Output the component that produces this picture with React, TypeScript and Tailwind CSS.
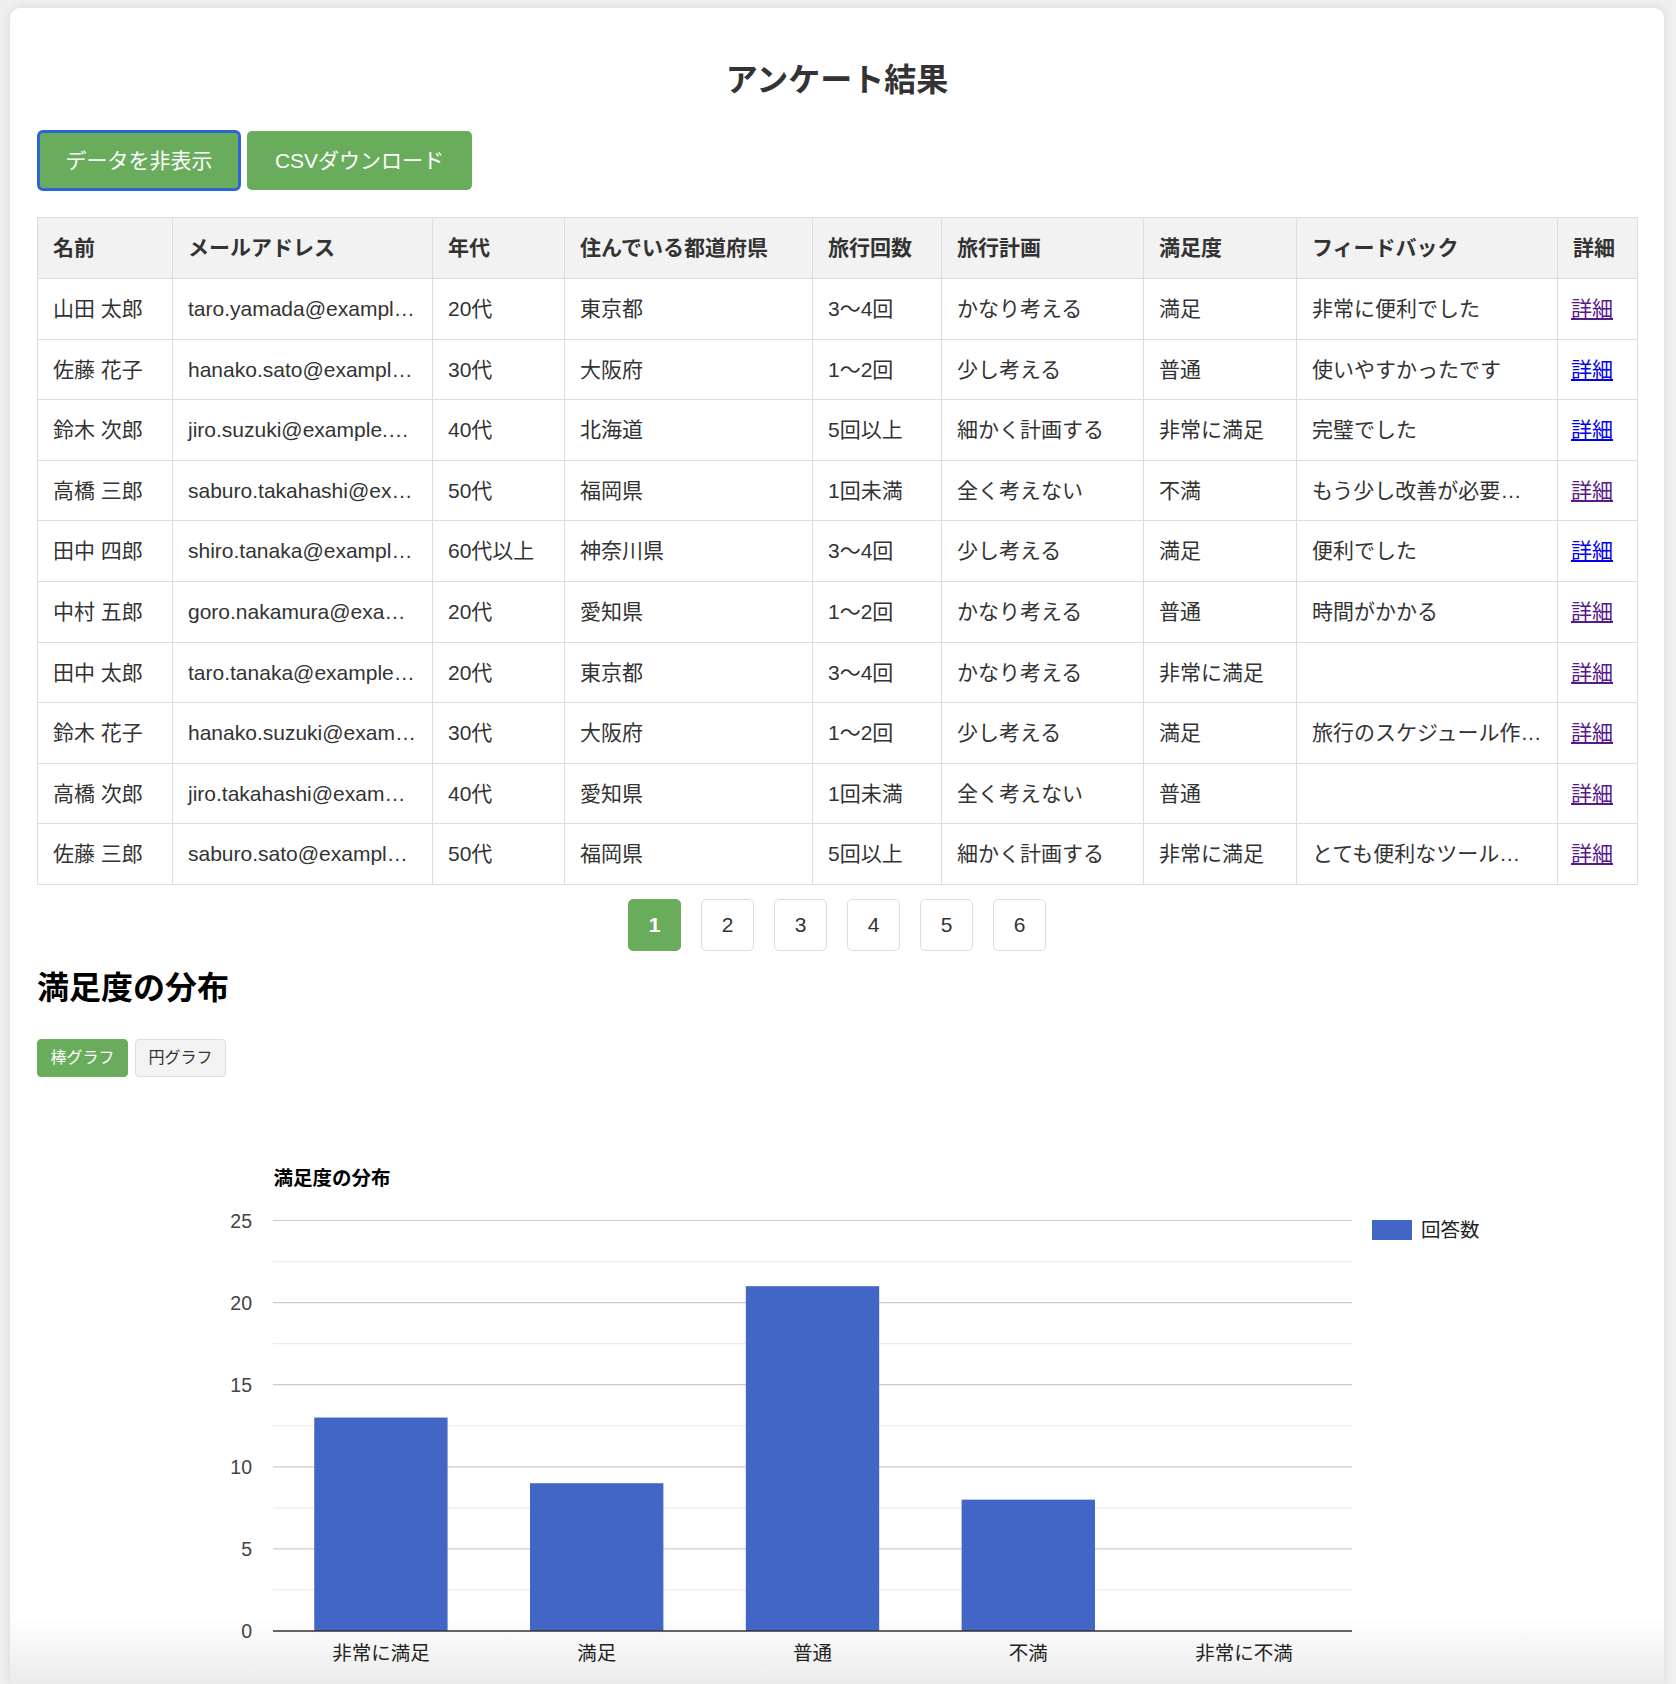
import React from "react";

const rows = [
  ["山田 太郎", "taro.yamada@example.com", "20代", "東京都", "3〜4回", "かなり考える", "満足", "非常に便利でした", true],
  ["佐藤 花子", "hanako.sato@example.com", "30代", "大阪府", "1〜2回", "少し考える", "普通", "使いやすかったです", false],
  ["鈴木 次郎", "jiro.suzuki@example.com", "40代", "北海道", "5回以上", "細かく計画する", "非常に満足", "完璧でした", false],
  ["高橋 三郎", "saburo.takahashi@example.com", "50代", "福岡県", "1回未満", "全く考えない", "不満", "もう少し改善が必要だと思います", true],
  ["田中 四郎", "shiro.tanaka@example.com", "60代以上", "神奈川県", "3〜4回", "少し考える", "満足", "便利でした", false],
  ["中村 五郎", "goro.nakamura@example.com", "20代", "愛知県", "1〜2回", "かなり考える", "普通", "時間がかかる", true],
  ["田中 太郎", "taro.tanaka@example.com", "20代", "東京都", "3〜4回", "かなり考える", "非常に満足", "", true],
  ["鈴木 花子", "hanako.suzuki@example.com", "30代", "大阪府", "1〜2回", "少し考える", "満足", "旅行のスケジュール作成が簡単でした", true],
  ["高橋 次郎", "jiro.takahashi@example.com", "40代", "愛知県", "1回未満", "全く考えない", "普通", "", true],
  ["佐藤 三郎", "saburo.sato@example.com", "50代", "福岡県", "5回以上", "細かく計画する", "非常に満足", "とても便利なツールでした", true],
] as const;

const headers = ["名前", "メールアドレス", "年代", "住んでいる都道府県", "旅行回数", "旅行計画", "満足度", "フィードバック", "詳細"];
const colWidths = [135, 260, 132, 248, 129, 202, 153, 261, 80];

const chartData = [
  { label: "非常に満足", value: 13 },
  { label: "満足", value: 9 },
  { label: "普通", value: 21 },
  { label: "不満", value: 8 },
  { label: "非常に不満", value: 0 },
];

function Chart() {
  const left = 236;
  const right = 1315;
  const base = 530;
  const unit = 16.42;
  const catW = (right - left) / 5;
  const barW = catW * 0.618;
  const font = "'Liberation Sans','Noto Sans CJK JP',sans-serif";
  const majors = [0, 5, 10, 15, 20, 25];
  const minors = [2.5, 7.5, 12.5, 17.5, 22.5];
  return (
    <svg width="1600" height="600" viewBox="0 0 1600 600" fontFamily={font} className="block">
      <text x="236.5" y="77" dominantBaseline="central" fontSize="19.5" fontWeight="bold" fill="#000">
        満足度の分布
      </text>
      {minors.map((v) => (
        <line key={"mi" + v} x1={left} x2={right} y1={base - v * unit} y2={base - v * unit} stroke="#ebebeb" strokeWidth="1.2" />
      ))}
      {majors.slice(1).map((v) => (
        <line key={"ma" + v} x1={left} x2={right} y1={base - v * unit} y2={base - v * unit} stroke="#cccccc" strokeWidth="1.2" />
      ))}
      {majors.map((v) => (
        <text key={"yl" + v} x="215" y={base - v * unit} textAnchor="end" dominantBaseline="central" fontSize="19.5" fill="#444">
          {v}
        </text>
      ))}
      {chartData.map((d, i) => (
        <rect
          key={d.label}
          x={left + i * catW + (catW - barW) / 2}
          y={base - d.value * unit}
          width={barW}
          height={d.value * unit}
          fill="#4166c5"
        />
      ))}
      <line x1={left} x2={right} y1={base} y2={base} stroke="#333" strokeWidth="1.5" />
      {chartData.map((d, i) => (
        <text key={"xl" + d.label} x={left + i * catW + catW / 2} y="552" textAnchor="middle" dominantBaseline="central" fontSize="19.5" fill="#222">
          {d.label}
        </text>
      ))}
      <rect x="1335" y="119" width="40" height="20" fill="#4166c5" />
      <text x="1384" y="129" dominantBaseline="central" fontSize="19.5" fill="#222">
        回答数
      </text>
    </svg>
  );
}

export default function App() {
  return (
    <div className="h-[1684px] overflow-hidden bg-[#efefef] pt-[8px] font-['Liberation_Sans','Noto_Sans_CJK_JP',sans-serif]">
      <div className="ml-[10px] h-[1676px] w-[1654px] rounded-t-[10px] bg-[linear-gradient(to_bottom,#ffffff_1607px,#ebebeb_1676px)] px-[27px] pt-[27px] shadow-[0_0_10px_rgba(0,0,0,0.1)]">
        <h1 className="mt-[21px] text-center text-[32px] font-bold leading-[48px] text-[#333]">アンケート結果</h1>

        <div className="mt-[27px] flex gap-[7px] pl-[1px]">
          <button className="h-[59px] w-[202px] rounded-[5px] bg-[#69ad5c] text-[21px] text-white outline-[3px] outline-offset-[-2px] outline-[#2b63d9] outline-solid">
            データを非表示
          </button>
          <button className="h-[59px] w-[225px] rounded-[5px] bg-[#69ad5c] text-[21px] text-white">CSVダウンロード</button>
        </div>

        <table className="mt-[27px] w-[1600px] table-fixed border-collapse text-[21px] text-[#333]">
          <colgroup>
            {colWidths.map((w, i) => (
              <col key={i} style={{ width: w }} />
            ))}
          </colgroup>
          <thead>
            <tr className="bg-[#f2f2f2]">
              {headers.map((h) => (
                <th key={h} className="overflow-hidden whitespace-nowrap border border-[#dddddd] px-[15px] py-[16px] text-left font-bold leading-[28px]">
                  {h}
                </th>
              ))}
            </tr>
          </thead>
          <tbody className="bg-white">
            {rows.map((r, ri) => (
              <tr key={ri}>
                {r.slice(0, 8).map((c, ci) => (
                  <td
                    key={ci}
                    className={
                      ri === 9 && ci === 7
                        ? "overflow-hidden text-ellipsis whitespace-nowrap border border-[#dddddd] pl-[15px] pr-[18px] py-[16px] leading-[27.6px]"
                        : "overflow-hidden text-ellipsis whitespace-nowrap border border-[#dddddd] px-[15px] py-[16px] leading-[27.6px]"
                    }
                  >
                    {c as string}
                  </td>
                ))}
                <td className="overflow-hidden whitespace-nowrap border border-[#dddddd] px-[13px] py-[16px] leading-[27.6px]">
                  <a href="#" className={"underline " + (r[8] ? "text-[#551a8b]" : "text-[#0000ee]")}>
                    詳細
                  </a>
                </td>
              </tr>
            ))}
          </tbody>
        </table>

        <div className="mt-[14px] flex justify-center gap-[20px]">
          {[1, 2, 3, 4, 5, 6].map((n) => (
            <div
              key={n}
              className={
                n === 1
                  ? "flex h-[52px] w-[53px] items-center justify-center rounded-[5px] border border-[#69ad5c] bg-[#69ad5c] text-[21px] font-bold text-white"
                  : "flex h-[52px] w-[53px] items-center justify-center rounded-[5px] border border-[#dddddd] bg-white text-[21px] text-[#333]"
              }
            >
              {n}
            </div>
          ))}
        </div>

        <h2 className="mt-[13px] text-[32px] font-bold leading-[48px] text-black">満足度の分布</h2>

        <div className="mt-[27px] flex gap-[7px]">
          <button className="h-[38px] w-[91px] rounded-[4px] border border-[#69ad5c] bg-[#69ad5c] text-[16px] text-white">棒グラフ</button>
          <button className="h-[38px] w-[91px] rounded-[4px] border border-[#dddddd] bg-[#f3f3f3] text-[16px] text-[#333]">円グラフ</button>
        </div>

        <div className="mt-[24px]">
          <Chart />
        </div>
      </div>
    </div>
  );
}
